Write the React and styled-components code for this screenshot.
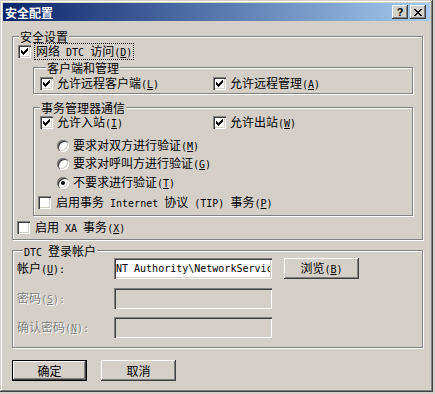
import styled, { createGlobalStyle } from "styled-components";

const GlobalStyle = createGlobalStyle`
  html, body {
    margin: 0;
    padding: 0;
    background: #d4d0c8;
  }
  body {
    font-family: "Noto Sans CJK SC", "Liberation Sans", sans-serif;
    font-size: 12px;
    line-height: 13px;
    color: #000;
  }
`;

const Window = styled.div`
  box-sizing: border-box;
  width: 433px;
  height: 392px;
  padding: 3px;
  background: #d4d0c8;
  box-shadow: inset -1px -1px #404040, inset 1px 1px #d4d0c8,
    inset -2px -2px #808080, inset 2px 2px #fff;
  display: flex;
  flex-direction: column;
`;

const TitleBar = styled.div`
  height: 18px;
  flex: none;
  display: flex;
  align-items: center;
  padding: 0 4px 0 2px;
  background: linear-gradient(to right, #0a246a, #a6caf0);
`;

const Title = styled.span`
  color: #fff;
  font-weight: 700;
`;

const CaptionButtons = styled.div`
  margin-left: auto;
  display: flex;
  gap: 2px;
`;

const raised = `
  background: #d4d0c8;
  box-shadow: inset -1px -1px #404040, inset 1px 1px #fff,
    inset -2px -2px #808080, inset 2px 2px #d4d0c8;
`;

const CapButton = styled.div`
  width: 16px;
  height: 14px;
  box-sizing: border-box;
  ${raised}
  display: flex;
  align-items: center;
  justify-content: center;
  font-family: "Liberation Sans", sans-serif;
  font-weight: 700;
  font-size: 11px;
  line-height: 14px;
`;

const Client = styled.div`
  flex: 1;
  display: flex;
  flex-direction: column;
  padding: 0 7px 0 9px;
`;

const Group = styled.div`
  display: flex;
  flex-direction: column;
  border: 1px solid #808080;
  box-shadow: inset 1px 1px #fff, 1px 1px #fff;
  margin: ${(p) => p.$m || "0"};
  padding: ${(p) => p.$p || "0"};
`;

const Legend = styled.div`
  align-self: flex-start;
  height: 13px;
  margin: -7px 0 0 6px;
  padding: 0 1px;
  background: #d4d0c8;
  white-space: nowrap;
`;

const Latin = styled.span`
  font-family: "DejaVu Sans Mono", "Liberation Mono", monospace;
  font-size: 10px;
  white-space: pre;
`;

const Row = styled.div`
  display: flex;
  align-items: center;
  height: ${(p) => p.$h || 13}px;
  margin: ${(p) => p.$m || "0"};
  white-space: nowrap;
`;

const Pair = styled.div`
  display: grid;
  grid-template-columns: 173px 1fr;
  height: 13px;
  margin: ${(p) => p.$m || "0"};
`;

const Box = styled.span`
  flex: none;
  width: 13px;
  height: 13px;
  box-sizing: border-box;
  background: #fff;
  box-shadow: inset 1px 1px #808080, inset 2px 2px #404040,
    inset -1px -1px #fff, inset -2px -2px #d4d0c8;
  display: block;
`;

const Round = styled.span`
  flex: none;
  width: 12px;
  height: 12px;
  border-radius: 50%;
  background: #fff;
  box-shadow: inset 1px 1px #808080, inset 2px 2px #404040,
    inset -1px -1px #fff, inset -2px -2px #d4d0c8;
  display: flex;
  align-items: center;
  justify-content: center;
  &::after {
    content: "";
    display: ${(p) => (p.$on ? "block" : "none")};
    width: 4px;
    height: 4px;
    border-radius: 50%;
    background: #000;
  }
`;

const Text = styled.span`
  margin-left: ${(p) => p.$gap ?? 4}px;
  white-space: nowrap;
`;

const Focus = styled.span`
  margin-left: 4px;
  padding: 0 1px;
  outline: 1px dotted #000;
  white-space: nowrap;
`;

const FieldLabel = styled.span`
  width: 97px;
  flex: none;
  white-space: nowrap;
  color: ${(p) => (p.$disabled ? "#808080" : "#000")};
  text-shadow: ${(p) => (p.$disabled ? "1px 1px #fff" : "none")};
`;

const Input = styled.input`
  box-sizing: border-box;
  width: 158px;
  height: 21px;
  margin: 0;
  padding: 0 2px;
  border: none;
  outline: none;
  background: ${(p) => (p.disabled ? "#d4d0c8" : "#fff")};
  box-shadow: inset 1px 1px #808080, inset 2px 2px #404040,
    inset -1px -1px #fff, inset -2px -2px #d4d0c8;
  font-family: "DejaVu Sans Mono", "Liberation Mono", monospace;
  font-size: 10px;
  color: #000;
`;

const Button = styled.button`
  box-sizing: border-box;
  width: 75px;
  height: 21px;
  margin: 0 0 0 ${(p) => p.$ml || 0}px;
  padding: 0;
  border: none;
  font-family: inherit;
  font-size: 12px;
  line-height: 13px;
  color: #000;
  ${raised}
  ${(p) =>
    p.$default &&
    `box-shadow: inset 0 0 0 1px #000, inset -2px -2px #404040,
      inset 2px 2px #fff, inset -3px -3px #808080;`}
`;

const ButtonBar = styled.div`
  display: flex;
  margin-top: 12px;
`;

// classic 7x7 tick, one 3px-tall column per x
const checkCols = [5, 6, 7, 6, 5, 4, 3];

const Check = ({ on }) => (
  <Box>
    {on && (
      <svg width="13" height="13" viewBox="0 0 13 13" shapeRendering="crispEdges">
        {checkCols.map((y, i) => (
          <rect key={i} x={3 + i} y={y} width="1" height="3" fill="#000" />
        ))}
      </svg>
    )}
  </Box>
);

const Key = ({ k, after = "" }) => (
  <Latin>
    (<u>{k}</u>){after}
  </Latin>
);

export default function App() {
  return (
    <>
      <GlobalStyle />
      <Window>
        <TitleBar>
          <Title>安全配置</Title>
          <CaptionButtons>
            <CapButton>?</CapButton>
            <CapButton>
              <svg width="8" height="7" viewBox="0 0 8 7" shapeRendering="crispEdges">
                <path d="M0 0h2v1h-2zM6 0h2v1h-2zM1 1h2v1h-2zM5 1h2v1h-2zM2 2h4v1h-4zM3 3h2v1h-2zM2 4h4v1h-4zM1 5h2v1h-2zM5 5h2v1h-2zM0 6h2v1h-2zM6 6h2v1h-2z" fill="#000" />
              </svg>
            </CapButton>
          </CaptionButtons>
        </TitleBar>
        <Client>
          <Group $m="15px 0 0 0" $p="0 0 5px 0">
            <Legend>安全设置</Legend>
            <Row $m="2px 0 0 5px">
              <Check on />
              <Focus>
                网络<Latin> DTC </Latin>访问<Key k="D" />
              </Focus>
            </Row>
            <Group $m="9px 9px 0 20px" $p="0 0 3px 6px">
              <Legend>客户端和管理</Legend>
              <Pair $m="3px 0 0 0">
                <Row>
                  <Check on />
                  <Text>
                    允许远程客户端<Key k="L" />
                  </Text>
                </Row>
                <Row>
                  <Check on />
                  <Text>
                    允许远程管理<Key k="A" />
                  </Text>
                </Row>
              </Pair>
            </Group>
            <Group $m="13px 9px 0 20px" $p="0 0 6px 0">
              <Legend>事务管理器通信</Legend>
              <Pair $m="2px 0 0 6px">
                <Row>
                  <Check on />
                  <Text>
                    允许入站<Key k="I" />
                  </Text>
                </Row>
                <Row>
                  <Check on />
                  <Text>
                    允许出站<Key k="W" />
                  </Text>
                </Row>
              </Pair>
              <Row $m="10px 0 0 23px">
                <Round />
                <Text>
                  要求对双方进行验证<Key k="M" />
                </Text>
              </Row>
              <Row $m="5px 0 0 23px">
                <Round />
                <Text>
                  要求对呼叫方进行验证<Key k="G" />
                </Text>
              </Row>
              <Row $m="6px 0 0 23px">
                <Round $on />
                <Text>
                  不要求进行验证<Key k="T" />
                </Text>
              </Row>
              <Row $m="7px 0 0 4px">
                <Check />
                <Text $gap={5}>
                  启用事务<Latin> Internet </Latin>协议<Latin> (TIP) </Latin>事务
                  <Key k="P" />
                </Text>
              </Row>
            </Group>
            <Row $m="5px 0 0 4px">
              <Check />
              <Text $gap={5}>
                启用<Latin> XA </Latin>事务<Key k="X" />
              </Text>
            </Row>
          </Group>

          <Group $m="10px 0 0 0" $p="0 0 9px 4px">
            <Legend>
              <Latin>DTC </Latin>登录帐户
            </Legend>
            <Row $h={21} $m="1px 0 0 0">
              <FieldLabel>
                帐户<Key k="U" after=":" />
              </FieldLabel>
              <Input readOnly value={"NT Authority\\NetworkService"} />
              <Button $ml={12}>
                浏览<Key k="B" />
              </Button>
            </Row>
            <Row $h={21} $m="9px 0 0 0">
              <FieldLabel $disabled>
                密码<Key k="S" after=":" />
              </FieldLabel>
              <Input disabled value="" />
            </Row>
            <Row $h={21} $m="8px 0 0 0">
              <FieldLabel $disabled>
                确认密码<Key k="N" after=":" />
              </FieldLabel>
              <Input disabled value="" />
            </Row>
          </Group>

          <ButtonBar>
            <Button $default>确定</Button>
            <Button $ml={14}>取消</Button>
          </ButtonBar>
        </Client>
      </Window>
    </>
  );
}
